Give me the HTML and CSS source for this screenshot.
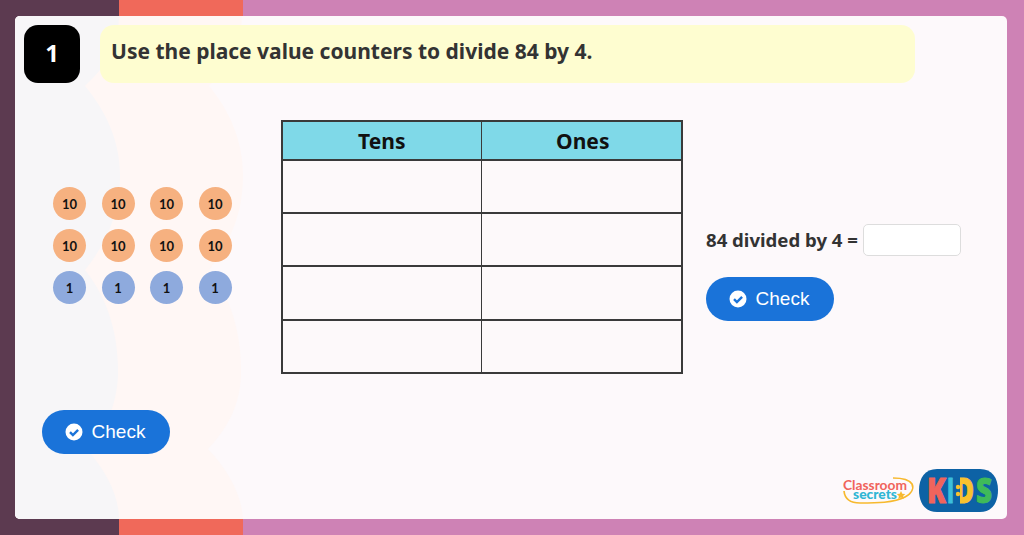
FILE: index.html
```html
<!DOCTYPE html>
<html lang="en">
<head>
    <meta charset="UTF-8">
    <meta name="viewport" content="width=device-width, initial-scale=1.0">
    <title>Divide 84 by 4</title>
    <link rel="stylesheet" href="styles.css">
</head>
<body>
    <div class="card">
        <!-- scalloped tint behind the card content -->
        <svg class="waves" viewBox="15 16 992 503" width="992" height="503" aria-hidden="true">
            <path fill="#fff7f5" d="M15 16H242C241 50 228 68 209 86C229 110 243 140 243 175C243 215 229 245 209 270C229 295 242 330 241 375C240 405 228 428 208 449C228 470 242 495 243 519H15Z"/>
            <path fill="#f7f6f8" d="M15 16H119C118 50 104 68 85 86C105 110 120 140 120 175C120 215 105 245 85 270C105 295 119 330 118 375C117 405 105 430 89 452C105 470 119 495 119 519H15Z"/>
        </svg>

        <div class="top">
            <div class="num">1</div>
            <div class="question">Use the place value counters to divide 84 by 4.</div>
        </div>

        <div class="main">
            <div class="left">
                <div class="counters">
                    <span class="counter tens">10</span>
                    <span class="counter tens">10</span>
                    <span class="counter tens">10</span>
                    <span class="counter tens">10</span>
                    <span class="counter tens">10</span>
                    <span class="counter tens">10</span>
                    <span class="counter tens">10</span>
                    <span class="counter tens">10</span>
                    <span class="counter ones">1</span>
                    <span class="counter ones">1</span>
                    <span class="counter ones">1</span>
                    <span class="counter ones">1</span>
                </div>
                <button class="check check-left">
                    <svg width="18" height="18" viewBox="0 0 18 18"><circle cx="9" cy="9" r="8.5" fill="#fff"/><path d="M5 9.2l2.9 2.9L13.1 6.9" fill="none" stroke="#1a73d9" stroke-width="2.4"/></svg>
                    Check
                </button>
            </div>

            <table class="grid">
                <colgroup>
                    <col class="col-tens">
                    <col>
                </colgroup>
                <thead>
                    <tr><th>Tens</th><th>Ones</th></tr>
                </thead>
                <tbody>
                    <tr><td></td><td></td></tr>
                    <tr><td></td><td></td></tr>
                    <tr class="tall-row"><td></td><td></td></tr>
                    <tr><td></td><td></td></tr>
                </tbody>
            </table>

            <div class="right">
                <div class="answer">
                    <label>84 divided by 4 =</label>
                    <input type="text">
                </div>
                <button class="check">
                    <svg width="18" height="18" viewBox="0 0 18 18"><circle cx="9" cy="9" r="8.5" fill="#fff"/><path d="M5 9.2l2.9 2.9L13.1 6.9" fill="none" stroke="#1a73d9" stroke-width="2.4"/></svg>
                    Check
                </button>
            </div>
        </div>

        <div class="footer">
            <svg class="logo" width="156" height="44" viewBox="0 0 156 44">
                <path d="M2 23C3 33 10 35 18 35C34 35 52 35 63 29C70 25 72 20 70 16C67 11 60 10 51 10" fill="none" stroke="#f7b92e" stroke-width="1.7"/>
                <text x="1" y="22" class="cs-top" textLength="64" lengthAdjust="spacingAndGlyphs">Classroom</text>
                <text x="11" y="31" class="cs-bottom" textLength="44" lengthAdjust="spacingAndGlyphs">secrets</text>
                <path d="M59 23l1.3 2.8 3 .3-2.2 2 .6 3-2.7-1.5-2.7 1.5.6-3-2.2-2 3-.3z" fill="#f7b92e"/>
                <path d="M95 1H138C150 1 156 10 156 22C156 35 150 44 138 44H95C83 44 77 35 77 22C77 10 83 1 95 1Z" fill="#0d62a5"/>
                <text x="85" y="35" class="kids" fill="#f0645c" stroke="#f0645c" textLength="19" lengthAdjust="spacingAndGlyphs">K</text>
                <text x="105" y="35" class="kids" fill="#3bbfdc" stroke="#3bbfdc" textLength="7" lengthAdjust="spacingAndGlyphs">I</text>
                <text x="113" y="35" class="kids" fill="#f9c22e" stroke="#f9c22e" textLength="19" lengthAdjust="spacingAndGlyphs">D</text>
                <rect x="112" y="7" width="6" height="30" fill="#0d62a5"/>
                <circle cx="116" cy="19" r="2.2" fill="#f9c22e"/>
                <circle cx="116" cy="26" r="2.2" fill="#f9c22e"/>
                <text x="134" y="35" class="kids" fill="#3fba5a" stroke="#3fba5a" textLength="16" lengthAdjust="spacingAndGlyphs">S</text>
            </svg>
        </div>
    </div>
</body>
</html>
```

FILE: styles.css
```css
html, body {
    margin: 0;
    padding: 0;
}
body {
    height: 535px;
    overflow: hidden;
    padding-top: 16px;
    box-sizing: border-box;
    background: linear-gradient(to right, #5c3a50 0, #5c3a50 119px, #f0695a 119px, #f0695a 243px, #ce82b5 243px);
    font-family: "Noto Sans", sans-serif;
}
.card {
    position: relative;
    width: 992px;
    height: 503px;
    margin-left: 15px;
    background-color: #fdf9fb;
    border-radius: 5px;
    overflow: hidden;
    display: flex;
    flex-direction: column;
}
.waves {
    position: absolute;
    left: 0;
    top: 0;
}
.top, .main, .footer {
    position: relative;
}
.top {
    display: flex;
    gap: 20px;
    margin: 9px 92px 0 9px;
}
.num {
    width: 56px;
    height: 58px;
    padding-bottom: 3px;
    box-sizing: border-box;
    background-color: #000;
    border-radius: 14px;
    color: white;
    font-size: 24px;
    font-weight: 700;
    display: flex;
    align-items: center;
    justify-content: center;
}
.question {
    flex: 1;
    height: 58px;
    background-color: #fefdd0;
    border-radius: 14px;
    padding: 0 11px 6px;
    box-sizing: border-box;
    color: #333;
    font-size: 21px;
    font-weight: 700;
    display: flex;
    align-items: center;
}
.main {
    display: grid;
    grid-template-columns: 266px 402px 1fr;
    margin-top: 37px;
}
.left {
    padding: 67px 0 0 27px;
}
.counters {
    display: grid;
    grid-template-columns: repeat(4, 33px);
    column-gap: 15.5px;
    row-gap: 9px;
    margin-left: 11px;
}
.counter {
    width: 33px;
    height: 33px;
    border-radius: 50%;
    color: #111;
    font-family: "Lato", sans-serif;
    font-size: 13px;
    font-weight: 700;
    display: flex;
    align-items: center;
    justify-content: center;
}
.tens {
    background-color: #f6b180;
}
.ones {
    background-color: #8eaadd;
}
.check {
    width: 128px;
    height: 44px;
    padding: 0 2px 0 0;
    border: none;
    border-radius: 22px;
    background-color: #1a73d9;
    color: white;
    font-family: "Liberation Sans", Arial, sans-serif;
    font-size: 19px;
    display: flex;
    align-items: center;
    justify-content: center;
    gap: 9px;
    cursor: pointer;
}
.check-left {
    margin-top: 106px;
}
.grid {
    width: 402px;
    align-self: start;
    border-collapse: collapse;
    table-layout: fixed;
}
.col-tens {
    width: 199px;
}
.grid th, .grid td {
    border: 2px solid #3a3a3a;
    border-left-width: 1px;
    border-right-width: 1px;
    padding: 0;
}
.grid th:first-child, .grid td:first-child {
    border-left-width: 2px;
}
.grid th:last-child, .grid td:last-child {
    border-right-width: 2px;
}
.grid th {
    height: 37px;
    background-color: #7fd9e8;
    color: #111;
    font-size: 21px;
    font-weight: 700;
}
.grid th:last-child {
    padding-left: 3px;
}
.grid td {
    height: 51px;
    background-color: #fdf9fa;
}
.grid .tall-row td {
    height: 52px;
}
.right {
    padding: 104px 0 0 23px;
}
.answer {
    display: flex;
    align-items: center;
    gap: 5px;
    margin-bottom: 21px;
}
.answer label {
    padding-bottom: 2px;
    color: #333;
    font-size: 18.6px;
    font-weight: 700;
}
.answer input {
    width: 98px;
    height: 32px;
    box-sizing: border-box;
    background-color: white;
    border: 1px solid #ddd;
    border-radius: 5px;
}
.footer {
    margin-top: auto;
    display: flex;
    justify-content: flex-end;
    padding: 0 9px 7px 0;
}
.logo {
    display: block;
}
.logo text {
    font-family: "Lato", sans-serif;
    font-weight: 700;
}
.logo .cs-top {
    font-size: 14px;
    fill: #f0645c;
}
.logo .cs-bottom {
    font-size: 14px;
    font-weight: 900;
    fill: #2fb6d4;
}
.logo .kids {
    font-family: "Open Sans", sans-serif;
    font-weight: 800;
    font-size: 35px;
    stroke-width: 1;
    stroke-linejoin: round;
}
```
